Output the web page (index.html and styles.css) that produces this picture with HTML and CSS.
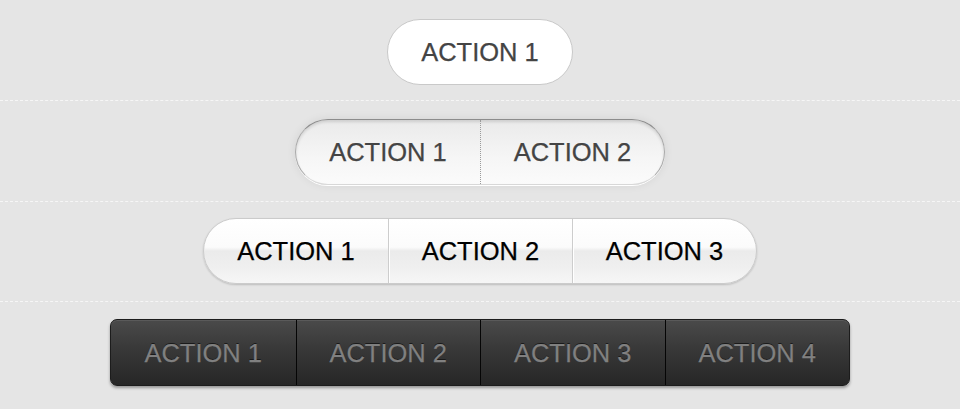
FILE: index.html
```html
<!DOCTYPE html>
<html>
<head>
<meta charset="utf-8">
<link rel="stylesheet" href="styles.css">
</head>
<body>
<section class="row r1">
  <div class="group g1">
    <span class="btn">ACTION 1</span>
  </div>
</section>
<section class="row r2">
  <div class="group g2">
    <span class="btn">ACTION 1</span>
    <span class="btn">ACTION 2</span>
  </div>
</section>
<section class="row r3">
  <div class="group g3">
    <span class="btn">ACTION 1</span>
    <span class="btn">ACTION 2</span>
    <span class="btn">ACTION 3</span>
  </div>
</section>
<section class="row r4">
  <div class="group g4">
    <span class="btn">ACTION 1</span>
    <span class="btn">ACTION 2</span>
    <span class="btn">ACTION 3</span>
    <span class="btn">ACTION 4</span>
  </div>
</section>
</body>
</html>
```
FILE: styles.css
```css
html, body {
  margin: 0;
  padding: 0;
  background: #e5e5e5;
  font-family: "Liberation Sans", Arial, sans-serif;
}
.row {
  height: 101px;
  display: flex;
  justify-content: center;
  align-items: flex-start;
  border-bottom: 1px dashed #f6f6f6;
  box-sizing: border-box;
}
.r1 { padding-top: 19px; }
.r2 { padding-top: 18px; }
.r3 { padding-top: 16px; height: 100px; }
.r4 {
  border-bottom: none;
  height: 107px;
  padding-top: 17px;
}
.group {
  display: flex;
}
.btn {
  width: 184px;
  height: 64px;
  display: flex;
  align-items: center;
  justify-content: center;
  font-size: 25.5px;
  box-sizing: border-box;
  -webkit-text-stroke: 0.25px currentColor;
  padding-top: 1px;
}
.g1 {
  background: #fff;
  border: 1px solid #c9c9c9;
  border-radius: 33px;
  color: #444;
}
.g2 {
  border-radius: 33px;
  background: linear-gradient(#eaeaea, #f6f6f6 60%, #fbfbfb);
  border: 1px solid #a9a9a9;
  border-top-color: #8c8c8c;
  border-bottom-color: #d8d8d8;
  box-shadow: inset 0 2px 3px rgba(0,0,0,0.12), 0 1px 0 #fff, 0 0 10px rgba(0,0,0,0.08);
  color: #444;
}
.g2 .btn + .btn {
  border-left: 1px dotted #9a9a9a;
}
.g3 {
  border-radius: 33px;
  border: 1px solid #cbcbcb;
  background: linear-gradient(#ffffff 0%, #fbfbfb 44%, #ebebeb 50%, #efefef 75%, #f6f6f6 100%);
  box-shadow: 0 1px 2px rgba(0,0,0,0.18);
  color: #000;
}
.g3 .btn + .btn {
  border-left: 1px solid #cdcdcd;
  box-shadow: inset 1px 0 0 #fff;
}
.g4 {
  border-radius: 7px;
  border: 1px solid #1c1c1c;
  background: linear-gradient(#4a4a4a, #3a3a3a 40%, #262626 100%);
  box-shadow: inset 0 1px 0 #5a5a5a, 0 2px 3px rgba(0,0,0,0.35);
  color: #808080;
  text-shadow: 0 -1px 0 #1a1a1a;
}
.g4 .btn {
  height: 65px;
  width: 184.5px;
}
.g4 .btn + .btn {
  border-left: 1px solid #050505;
}
```
